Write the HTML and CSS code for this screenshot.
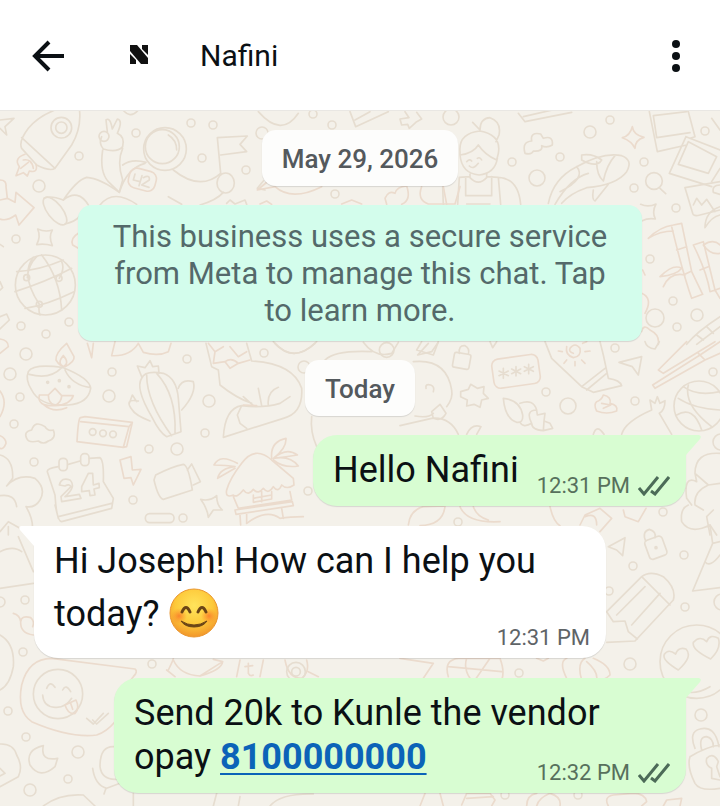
FILE: index.html
```html
<!DOCTYPE html>
<html lang="en">
<head>
    <meta charset="UTF-8">
    <meta name="viewport" content="width=device-width, initial-scale=1.0">
    <title>Nafini</title>
    <link rel="stylesheet" href="styles.css">
</head>
<body>
    <header class="topbar">
        <button class="back" type="button" aria-label="Back">
            <svg width="34" height="32" viewBox="0 0 34 32"><path d="M33 16H4M18 2L4 16L18 30" fill="none" stroke="#0b1014" stroke-width="4"/></svg>
        </button>
        <div class="avatar">
            <svg width="18" height="22" viewBox="0 0 18 22" fill="#111"><path d="M0 0H7L18 13V19H11L0 6Z"/><path d="M12 0H18V10L12 4Z"/><path d="M0 9L6 15V19H0Z"/></svg>
        </div>
        <h1 class="name">Nafini</h1>
        <button class="menu" type="button" aria-label="More options">
            <svg width="8" height="32" viewBox="0 0 8 32" fill="#0b1014"><circle cx="4" cy="4" r="4"/><circle cx="4" cy="16" r="4"/><circle cx="4" cy="28" r="4"/></svg>
        </button>
    </header>
    <main class="chat">
        <!-- doodle wallpaper -->
        <svg class="wallpaper" viewBox="0 333 2160 2085" preserveAspectRatio="xMidYMin slice" aria-hidden="true">
            <!-- rocket, astronaut, flag, globe -->
            <g transform="translate(0 315)">
                <path d="M0 45L42 40L15 65L20 90L0 70M85 70Q130 15 235 -5Q250 60 215 120L165 190Q150 200 110 180L65 130Q55 110 85 70ZM65 98L165 190"/>
                <circle cx="184" cy="68" r="31"/><circle cx="184" cy="68" r="17"/>
                <path class="warm" d="M75 148Q40 160 58 185L48 212L70 203L82 213L88 198Q115 205 108 178M70 165Q95 160 100 190M62 190L85 172"/>
                <path d="M322 80L318 45Q330 35 337 72L352 42Q370 45 352 85Q375 95 368 125Q350 145 310 132Q295 115 305 95M308 135Q298 200 325 230L358 262L368 225Q350 170 368 130"/>
                <circle cx="312" cy="94" r="15"/>
                <path d="M365 10Q390 45 415 15"/>
                <circle cx="495" cy="132" r="64"/><circle cx="487" cy="125" r="51"/>
                <path d="M505 90Q530 105 530 135M368 180Q395 160 438 172M435 175Q380 190 358 262M520 195Q600 260 662 205M190 285Q230 225 260 217Q300 220 358 262M190 285Q235 250 265 300M300 300Q340 250 410 298M600 300Q650 285 670 262M505 275L545 298"/>
                <rect class="warm" x="386" y="194" width="82" height="60" rx="22" transform="rotate(15 427 224)"/>
                <path d="M405 207L400 225L420 230M426 212L417 242M430 218Q450 208 448 225L425 240L447 247"/>
                <path d="M662 205L652 98L742 93L720 118L740 140L662 150"/><ellipse cx="677" cy="234" rx="26" ry="30"/>
                <path d="M790 228L772 250L795 255M680 295L690 285L705 297L735 285L740 298"/>
                <path class="warm" d="M0 225Q20 225 18 245L22 280L45 292L48 262L102 308L57 360L47 330Q20 350 0 342M0 285L22 280"/>
                <ellipse cx="165" cy="318" rx="22" ry="50" transform="rotate(-38 165 318)"/><path d="M132 280Q150 270 190 285M195 357Q225 350 238 335"/>
                <path d="M113 372Q135 382 157 375Q145 395 157 422Q132 415 110 419Q123 395 113 372Z"/>
                <path class="warm" d="M235 385Q210 400 218 420L235 430"/>
                <circle cx="136" cy="540" r="90"/>
                <path d="M50 500Q120 495 190 465M45 560Q140 530 215 490M75 610Q140 600 222 560M100 457Q60 510 118 598Q115 620 120 630M125 450Q180 520 185 615M82 518Q85 480 110 455M178 520Q195 490 185 470"/>
                <circle cx="80" cy="518" r="9"/><circle cx="177" cy="520" r="9"/><circle cx="118" cy="598" r="9"/>
                <path d="M0 635L20 627L28 645L0 672M0 418L10 425M0 530L8 548L0 555"/>
            </g>
            <!-- cook, fish, photos, bamboo -->
            <g transform="translate(1290 315)">
                <path d="M265 25L285 50L425 22M280 35L410 5M128 52L150 75Q150 40 180 38Q215 50 207 90L198 110M90 140Q85 85 150 78Q215 90 205 145L200 165Q165 150 145 120Q130 145 90 150ZM90 150Q95 205 147 210Q195 205 202 160M110 170Q118 160 125 168M142 160Q150 155 155 165M118 183Q130 195 145 175M120 207V218Q145 245 170 218V205M88 217L120 215M170 215L205 217Q265 220 272 298M40 298L38 245M88 217L83 298M107 220V272H185V215M205 217L212 298M110 297H180"/>
                <path d="M285 145Q275 110 305 108Q300 80 332 87L340 100Q370 90 367 120Q350 130 335 122Q340 140 310 138Q305 150 285 145Z"/>
                <path class="warm" d="M607 65Q610 90 642 97Q615 105 615 130Q605 108 577 98Q600 92 607 65Z"/>
                <path d="M355 295Q370 220 440 185Q520 140 575 152Q610 165 590 200Q560 240 470 248Q420 265 395 295M440 185Q470 220 390 260M375 298Q420 220 475 205M455 150Q490 145 515 165Q500 190 455 165ZM500 170Q500 210 520 228Q530 180 555 152M490 255Q485 285 495 288L535 238"/>
                <path d="M658 20L682 140L770 120M670 32L770 20M680 98L780 83M670 32L680 98M775 20L795 95L780 100M768 95L870 135M768 95L718 205L845 245M775 110L860 155L835 205L745 178ZM845 40L870 75M845 230L870 190"/>
                <circle cx="672" cy="228" r="25"/><path d="M690 250L707 266M765 248L870 230M765 248L788 325Q790 335 810 330L870 315M790 300L800 280L815 300L830 283L855 320M870 240Q845 240 850 262L870 268"/>
                <path d="M632 298Q655 308 678 297Q665 320 676 342Q655 338 635 348M870 305Q825 320 825 368Q845 335 870 330"/>
                <path class="warm" d="M655 400Q690 365 730 360L755 355L785 500L818 568L785 580Q760 510 725 365M730 378Q690 378 655 400M740 435L770 425M760 510L785 498M790 420L820 410L855 555L870 580M790 420Q830 500 840 560L870 550M810 495L835 485M690 515Q730 475 755 490Q740 510 690 515ZM700 545Q720 500 765 510"/>
                <path class="warm" d="M820 420Q850 400 870 420M820 420Q840 450 870 445M635 565Q670 580 645 625M635 680Q640 655 660 675Q690 690 685 718M638 495L645 510"/>
                <path d="M770 718Q800 680 870 635M800 718L870 665M800 690L820 705M830 665L850 685"/>
            </g>
            <!-- objects between the date pills -->
            <g transform="translate(675 315)">
                <path d="M100 20Q170 100 220 25M375 20L392 65L490 20M390 45L435 20M540 20L552 38L525 42L530 60L548 58L553 70L575 50L590 42L575 22"/>
                <path class="warm" d="M130 228L97 255L150 245Q200 290 290 245M480 280Q490 255 510 265Q515 245 545 243Q560 285 530 298M480 280L485 298M590 245Q575 285 610 297H690L705 245M655 245L665 298M105 297L125 288L140 298M350 297L380 285L410 297"/>
                <path d="M145 710Q205 780 275 710M300 765Q330 735 440 740M610 715L578 750L620 740L640 712M415 712Q450 760 500 745L520 712"/>
                <circle cx="485" cy="735" r="22"/>
            </g>
            <!-- diya lamp, cactus, fox, calendar, hut -->
            <g transform="translate(0 1005)">
                <path class="warm" d="M200 25Q165 55 168 75Q180 95 195 95Q225 80 222 65ZM190 62Q170 85 190 95Q210 85 190 62"/>
                <path d="M85 110Q100 85 190 98Q270 130 272 160Q265 205 205 210Q120 215 95 165Q75 135 85 110ZM88 118Q150 135 185 98M195 105Q215 150 272 158"/>
                <path class="warm" d="M118 180Q110 215 165 212Q210 210 220 182L185 182L165 160L145 180ZM130 208Q160 235 200 218M145 180Q145 205 165 212Q185 200 185 182"/>
                <circle cx="143" cy="142" r="3"/><circle cx="178" cy="137" r="3"/><circle cx="207" cy="155" r="3"/>
                <path class="warm" d="M262 25L275 68L280 25M345 20L335 62Q390 65 415 25M415 25L430 52Q475 65 505 50L513 25M0 55L25 35Q25 15 0 12M0 168Q25 200 0 245M0 302Q18 310 18 325Q10 345 0 340"/>
                <path d="M425 130Q435 105 490 115Q530 130 535 190L543 290L500 305Q480 295 455 245Q405 160 425 130ZM440 120Q440 200 515 302M470 115Q530 180 525 295M425 125L412 93L435 98L450 77L458 95L475 93L477 115M415 198Q370 190 397 225Q405 240 450 258M535 160Q545 130 580 140Q590 175 545 225M388 205L397 180L410 200"/>
                <path class="warm" d="M242 248Q235 245 231 320L370 337L380 335L397 262L255 245ZM242 260L387 275L370 337M387 275L397 262"/>
                <circle cx="278" cy="291" r="10"/><circle cx="309" cy="295" r="10"/><circle cx="339" cy="298" r="10"/>
                <path d="M80 310Q70 290 95 285Q105 255 135 275Q145 290 160 285Q170 310 145 318Q130 330 115 318Q85 325 80 310Z"/>
                <path d="M618 25L635 95L655 105L660 150Q710 190 755 205M740 25L755 78Q880 85 905 160Q910 235 850 250L670 307Q675 220 725 212Q790 220 840 205L870 185M725 212L712 240L720 265L740 280M775 160L785 212M835 157Q800 170 805 212M730 185L760 212"/>
                <path class="warm" d="M625 25L645 50L640 85L675 80L690 100L715 85L750 75M645 50L670 35M690 35L715 65L740 50M730 210L770 212M675 80Q695 65 715 85"/>
                <path d="M825 25Q880 85 945 25M935 245Q930 290 950 335"/>
                <path d="M0 360Q40 370 38 430L20 453Q55 415 105 430Q140 460 120 495Q105 520 78 515Q105 560 95 600M0 482Q45 475 50 515M0 590L25 560L60 580"/>
                <path d="M142 410Q140 400 175 395M205 388L240 378M268 370L300 368Q312 375 310 440L340 490L335 520L185 560Q170 560 165 480L142 410M165 510L175 550M175 545L335 505"/>
                <rect x="177" y="370" width="25" height="37" rx="11"/><rect x="242" y="356" width="25" height="36" rx="11"/>
                <path d="M178 450Q185 425 210 435Q230 455 195 485L238 478L243 490L185 500L183 485L213 455Q208 445 195 453ZM245 455L265 415L278 415L280 450L297 445L298 458L282 462L285 480L270 482L268 467L245 470Z"/>
                <path class="warm" d="M360 375L393 365L397 405L423 403L400 450L393 428L372 430Z"/>
                <path d="M467 420Q515 395 550 388Q565 390 577 465L490 493Q475 490 462 435ZM562 405L575 387L601 440L580 450M602 493Q630 500 650 482Q650 510 667 525L640 525L625 547Q622 520 602 493Z"/>
                <rect x="436" y="536" width="86" height="27" rx="13"/>
                <path class="warm" d="M680 465Q690 430 725 385Q765 330 815 375L880 430L882 450Q860 465 845 450Q835 475 820 455Q805 480 790 460Q775 480 760 463Q745 485 730 465Q710 490 700 480Q675 490 680 465M700 485L715 520L875 495L870 470M705 525L877 500L880 512L708 538ZM720 540L722 570M740 535V565M845 520L850 550M760 480V502L815 492V470M785 470V500M760 490L815 480"/>
                <path class="warm" d="M712 385Q660 355 642 390Q680 390 705 395Q660 400 653 430L705 400M815 370Q810 320 858 310Q860 340 820 370Q860 335 892 360Q860 365 820 370Q870 360 895 393Q850 400 820 375M740 565Q800 520 840 550Q870 545 910 545"/>
            </g>
            <!-- padlock, kite, shell, basketball -->
            <g transform="translate(1200 1005)">
                <path d="M65 20L50 45L100 60L115 20M270 20L278 38L290 20"/>
                <rect x="160" y="55" width="50" height="45" rx="6" transform="rotate(10 185 78)"/><path d="M178 55Q175 30 195 32Q210 40 205 57"/>
                <rect class="warm" x="278" y="65" width="140" height="88" rx="20" transform="rotate(-8 348 109)"/>
                <path d="M310 100V130M297 108L325 122M297 122L325 108M348 95V123M335 102L362 116M335 116L362 102M386 88V116M373 95L400 109M373 109L400 95"/>
                <path d="M40 80Q140 70 155 165Q160 190 140 215M45 243Q85 250 100 235M78 160Q75 145 92 150Q105 155 100 170M0 272L95 250Q150 245 175 298M95 230L120 208L138 235Q125 260 100 250Z"/>
                <path d="M182 170L205 163L212 148L232 160L252 155L250 175L265 190L245 195L240 217L222 208L200 213L202 195L182 185Z"/>
                <path d="M435 20L455 70L545 155L580 172L665 152Q660 135 625 130L610 60L600 20M545 155L615 100M560 165L620 115"/>
                <path class="warm" d="M520 55Q505 50 510 40Q525 20 540 40Q545 65 520 68Q495 60 500 35M487 50L475 48M500 75L492 85M525 80V92M545 75L555 85M555 50L570 48M548 25L560 20"/>
                <path d="M657 82L725 65L715 120L697 95ZM735 20Q740 40 765 42L778 20"/>
                <path class="warm" d="M775 105L860 20M790 115L945 20M775 105L790 115M758 150L900 60L960 20M765 160L915 75L960 55M758 150L765 160M895 55L915 75"/>
                <circle cx="897" cy="213" r="75"/><path d="M850 155Q890 185 960 170M835 190Q880 220 960 225M830 240Q880 210 905 285M865 150Q850 210 935 275"/>
                <path d="M310 190Q360 195 368 240Q370 265 350 262Q315 250 310 190ZM360 205Q400 190 410 225L412 240L435 235L432 258L450 265L458 280L430 287Q395 285 395 265Q370 280 360 262M410 225Q375 225 395 265M432 258L430 287"/>
                <path class="warm" d="M590 200Q605 195 610 180Q635 185 630 205Q655 210 650 228Q620 240 590 228Q580 210 590 200ZM605 205L632 210L610 220"/>
                <path d="M665 298Q675 260 755 225L750 195L765 205L772 185L780 205L795 197Q795 225 778 235L815 298M200 298Q215 265 243 275L230 298M580 298Q590 265 612 298"/>
                <path d="M960 355Q885 350 885 415L890 440Q850 420 860 490L875 510M885 415L925 450L960 445M925 450Q880 470 885 510L910 525M865 510Q840 520 845 560Q870 600 930 570M940 525L920 545L930 600M930 570L950 600"/>
                <path class="warm" d="M25 570Q30 525 70 515L135 513Q130 570 60 572M180 515Q200 565 300 560M220 515Q230 545 265 555M450 515Q460 560 480 572M540 570L555 540L600 520L635 550L600 590M555 545Q590 530 590 570M670 525L675 545L715 560L738 520"/>
            </g>
            <!-- left side of the message area -->
            <g transform="translate(0 1545)">
                <path d="M0 110Q40 90 65 110M25 35V60M55 65L100 170M0 220L100 205"/>
                <path class="warm" d="M40 295Q60 300 62 320Q60 355 100 360M62 320Q65 300 92 308Q105 320 98 335"/>
                <path d="M0 360Q45 385 40 455Q30 510 0 525"/>
                <path class="warm" d="M155 430Q85 430 65 510Q50 590 95 620Q210 670 290 660Q320 650 345 620M155 430L405 462Q415 470 400 485L365 530"/>
            </g>
            <!-- padlock, pencil, heart-eyes face -->
            <g transform="translate(1200 1545)">
                <rect x="740" y="68" width="55" height="60" rx="10" transform="rotate(-20 768 98)"/><path d="M737 78Q725 50 748 43Q770 50 765 68"/><circle cx="768" cy="98" r="3"/>
                <path d="M625 95L675 68L668 122L650 105ZM620 290L725 185Q750 165 790 185Q830 220 820 255L705 378L620 382M725 185L810 270M735 215L650 300M780 235L695 330M620 290L640 320L675 318L685 350L712 372M938 85L960 80M938 85L878 228L960 218M915 140Q930 160 960 120M930 30L938 85"/>
                <circle cx="890" cy="440" r="110"/>
                <path d="M835 465Q785 435 793 418Q805 400 827 417Q835 395 858 402Q880 425 835 465ZM932 432Q875 405 880 382Q900 360 920 380Q930 355 955 370Q965 400 932 432ZM830 515Q870 550 930 515"/>
                <path class="warm" d="M0 430L100 445L70 490M145 485Q130 435 175 430H300Q315 470 305 495M145 455L305 470M200 430Q190 460 210 490M270 430L225 495M500 490Q475 440 500 430M545 495Q530 445 555 430M580 430Q630 450 630 480Q610 500 580 495M560 440Q595 470 590 495M410 430L430 438L445 430"/>
            </g>
            <!-- winking face, moon, key -->
            <g transform="translate(0 1950)">
                <circle cx="174" cy="132" r="74"/><path d="M140 115Q150 90 165 112M188 120Q198 100 212 125M128 135Q130 170 165 172Q195 175 215 145"/>
                <path class="warm" d="M195 165L228 150Q240 175 225 190Q205 195 195 165ZM212 160L218 178"/>
                <path d="M260 205L280 222L310 190M278 210L290 222L325 190M130 287Q75 300 90 345Q120 390 165 350L173 325Q120 335 130 287Z"/>
                <path d="M0 282Q40 280 50 315Q70 350 55 380L0 410M0 355L15 370L0 378M345 290Q300 285 300 350Q305 390 350 388M278 355Q285 405 320 415L360 400M318 415L312 432M130 468Q180 430 250 435L285 468M400 430V468M640 468L650 430M720 440L715 468M810 468Q840 430 940 432"/>
                <path class="warm" d="M500 60L525 80M505 60Q520 30 520 25M520 30Q540 75 600 78Q665 60 668 35L640 28M600 78L668 35M720 30L710 80M790 30L780 80M745 40V70Q750 80 760 75M735 50L758 47M855 30Q865 85 905 85Q930 65 920 30M925 65L955 80"/>
                <circle cx="888" cy="65" r="28"/><circle cx="888" cy="65" r="13"/>
            </g>
            <g transform="translate(1200 1950)">
                <path d="M885 295Q865 245 900 237Q945 225 957 290M905 300Q895 260 920 260Q940 265 940 290M870 320Q920 290 960 285M870 320Q860 350 885 400Q900 425 960 415M935 355Q915 345 920 325Q940 305 955 335L950 350L960 380M935 355L935 385L960 390"/>
                <path class="warm" d="M60 468L75 430M120 430L130 468M185 465L200 430H270L285 450L275 468M200 445L280 440M380 468Q380 435 410 430M410 468Q415 445 450 430Q485 440 480 468M625 468Q610 440 640 435L700 430Q735 430 740 455L725 468M790 468L800 450L845 445L840 468"/>
            </g>
            <!-- loose bubbles -->
            <g transform="scale(3)" class="dots">
                <circle cx="136" cy="133" r="4"/><circle cx="191" cy="123" r="4"/><circle cx="213" cy="125" r="4"/><circle cx="79" cy="156" r="4"/><circle cx="202" cy="158" r="4"/><circle cx="246" cy="170" r="4"/><circle cx="39" cy="186" r="6"/><circle cx="16" cy="239" r="4"/><circle cx="21" cy="326" r="4"/><circle cx="46" cy="334" r="4"/><circle cx="69" cy="322" r="4"/>
                <circle cx="262" cy="133" r="6"/><circle cx="332" cy="125" r="4"/><circle cx="335" cy="194" r="4"/><circle cx="313" cy="114" r="4"/>
                <circle cx="451" cy="117" r="8"/><circle cx="610" cy="120" r="4"/><circle cx="590" cy="132" r="6"/><circle cx="512" cy="162" r="4"/><circle cx="560" cy="157" r="4"/><circle cx="537" cy="178" r="8"/><circle cx="705" cy="131" r="4"/><circle cx="644" cy="162" r="4"/><circle cx="634" cy="188" r="4"/><circle cx="676" cy="208" r="4"/><circle cx="650" cy="259" r="4"/><circle cx="673" cy="301" r="4"/><circle cx="697" cy="315" r="6"/><circle cx="677" cy="327" r="4"/><circle cx="655" cy="318" r="9"/>
                <circle cx="26" cy="354" r="6"/><circle cx="10" cy="374" r="6"/><circle cx="20" cy="397" r="4"/><circle cx="112" cy="372" r="4"/><circle cx="109" cy="396" r="6"/><circle cx="14" cy="424" r="4"/><circle cx="187" cy="359" r="4"/><circle cx="209" cy="401" r="6"/><circle cx="205" cy="433" r="4"/><circle cx="177" cy="449" r="6"/><circle cx="149" cy="449" r="4"/><circle cx="34" cy="462" r="4"/><circle cx="133" cy="500" r="4"/><circle cx="183" cy="518" r="4"/><circle cx="308" cy="491" r="4"/><circle cx="264" cy="353" r="4"/><circle cx="304" cy="367" r="6"/>
                <circle cx="615" cy="348" r="4"/><circle cx="713" cy="372" r="4"/><circle cx="568" cy="406" r="8"/><circle cx="546" cy="392" r="4"/><circle cx="635" cy="401" r="4"/><circle cx="663" cy="512" r="4"/><circle cx="721" cy="442" r="8"/><circle cx="458" cy="522" r="4"/>
                <circle cx="684" cy="555" r="4"/><circle cx="633" cy="566" r="4"/><circle cx="685" cy="607" r="4"/><circle cx="630" cy="664" r="6"/><circle cx="519" cy="673" r="4"/><circle cx="722" cy="602" r="8"/><circle cx="609" cy="591" r="4"/>
                <circle cx="8" cy="711" r="4"/><circle cx="26" cy="737" r="4"/><circle cx="78" cy="752" r="6"/><circle cx="68" cy="779" r="4"/><circle cx="30" cy="790" r="6"/><circle cx="152" cy="664" r="4"/><circle cx="23" cy="652" r="4"/><circle cx="25" cy="600" r="4"/><circle cx="0" cy="602" r="5"/>
                <circle cx="701" cy="715" r="6"/><circle cx="505" cy="795" r="4"/><circle cx="578" cy="795" r="4"/>
            </g>
        </svg>

        <div class="pill">May 29, 2026</div>
        <p class="notice">This business uses a secure service from Meta to manage this chat. Tap to learn more.</p>
        <div class="pill">Today</div>

        <div class="bubble out short">
            <p class="text">Hello Nafini</p>
            <div class="meta">
                <time>12:31 PM</time>
                <svg class="ticks" width="32" height="20" viewBox="0 0 32 20"><path d="M1 12L6 18L20 1M13 15L17 18L31 1" fill="none" stroke="#4c6b58" stroke-width="3"/></svg>
            </div>
            <svg class="tail" width="16" height="20" viewBox="0 0 16 20"><path d="M0 0H13Q16 1 14 4L0 20Z" fill="#d8fdd2"/></svg>
        </div>

        <div class="bubble in">
            <svg class="tail" width="16" height="20" viewBox="0 0 16 20"><path d="M16 0H3Q0 1 2 4L16 20Z" fill="#fff"/></svg>
            <p class="text">Hi Joseph! How can I help you today?
                <svg class="emoji" width="50" height="50" viewBox="0 0 50 50" role="img" aria-label="smiling face">
                    <defs>
                        <radialGradient id="face" cx="50%" cy="35%" r="65%"><stop offset="0" stop-color="#ffe45c"/><stop offset=".6" stop-color="#fdc93a"/><stop offset="1" stop-color="#f2962a"/></radialGradient>
                        <radialGradient id="cheek"><stop offset="0" stop-color="#f9732a" stop-opacity=".8"/><stop offset="1" stop-color="#f98a2a" stop-opacity="0"/></radialGradient>
                    </defs>
                    <circle cx="25" cy="25" r="24" fill="url(#face)" stroke="#ea962f"/>
                    <circle cx="10" cy="28" r="8" fill="url(#cheek)"/><circle cx="40" cy="28" r="8" fill="url(#cheek)"/>
                    <path d="M13 24Q17 15 21 24M29 24Q33 15 37 24" fill="none" stroke="#6b4516" stroke-width="3" stroke-linecap="round"/>
                    <path d="M12 33Q25 41 38 33Q34 39 25 39Q16 39 12 33Z" fill="#6b4516" stroke="#6b4516" stroke-linejoin="round"/>
                </svg>
            </p>
            <div class="meta"><time>12:31 PM</time></div>
        </div>

        <div class="bubble out">
            <p class="text">Send 20k to Kunle the vendor opay <a href="tel:8100000000">8100000000</a></p>
            <div class="meta">
                <time>12:32 PM</time>
                <svg class="ticks" width="32" height="20" viewBox="0 0 32 20"><path d="M1 12L6 18L20 1M13 15L17 18L31 1" fill="none" stroke="#4c6b58" stroke-width="3"/></svg>
            </div>
            <svg class="tail" width="16" height="20" viewBox="0 0 16 20"><path d="M0 0H13Q16 1 14 4L0 20Z" fill="#d8fdd2"/></svg>
        </div>
    </main>
</body>
</html>
```
FILE: styles.css
```css
*{
    margin: 0;
    padding: 0;
    box-sizing: border-box;
}
body{
    min-height: 100vh;
    display: flex;
    flex-direction: column;
    font-family: Roboto, "Liberation Sans", sans-serif;
    color: #0b1014;
    background-color: #f4f1ea;
}
button{
    border: 0;
    background: none;
    cursor: pointer;
}
svg{
    display: block;
}
/* top bar */
.topbar{
    display: flex;
    align-items: center;
    height: 111px;
    padding: 2px 32px 0 31px;
    background-color: #fff;
    border-bottom: 1px solid #e9e7e3;
}
.avatar{
    width: 80px;
    margin: 0 21px 0 34px;
    display: flex;
    justify-content: center;
}
.name{
    flex: 1;
    font-size: 30px;
    font-weight: 400;
    line-height: 36px;
}
.menu{
    width: 24px;
    display: flex;
    justify-content: center;
}
/* chat */
.chat{
    flex: 1;
    position: relative;
    overflow: hidden;
    display: flex;
    flex-direction: column;
    align-items: center;
    gap: 19px;
    padding: 19px 34px 13px;
}
.wallpaper{
    position: absolute;
    top: 0;
    left: 0;
    width: 100%;
    height: 100%;
    fill: none;
    stroke: #e6ddd0;
    stroke-width: 5;
    stroke-linejoin: round;
    stroke-linecap: round;
}
.wallpaper .warm{
    stroke: #ebdbcd;
}
.wallpaper .dots{
    stroke-width: 1.6;
}
.pill, .notice, .bubble{
    position: relative;
    box-shadow: 0 1px 1px rgba(11, 20, 26, 0.12);
}
.pill{
    padding: 13px 20px 11px;
    border-radius: 14px;
    background-color: #fdfdfc;
    color: #54595d;
    font-size: 26px;
    font-weight: 500;
    line-height: 32px;
}
.notice{
    max-width: calc(100% - 88px);
    padding: 13px 32px 12px;
    border-radius: 14px;
    background-color: #d3fdec;
    color: #54696a;
    font-size: 31px;
    line-height: 37px;
    text-align: center;
}
.bubble{
    max-width: calc(100% - 80px);
    padding: 13px 16px 7px 20px;
    border-radius: 24px;
    font-size: 36px;
    line-height: 44px;
}
.bubble + .bubble{
    margin-top: 1px;
}
.text{
    padding-bottom: 7px;
}
.in{
    align-self: flex-start;
    background-color: #fff;
    border-top-left-radius: 0;
}
.out{
    align-self: flex-end;
    background-color: #d8fdd2;
    border-top-right-radius: 0;
}
.short{
    display: flex;
    gap: 18px;
}
.meta{
    display: flex;
    justify-content: flex-end;
    align-items: center;
    gap: 8px;
    margin-top: -26px;
    color: #5f6467;
    font-size: 22px;
    line-height: 26px;
}
.out .meta{
    color: #57705c;
}
.short .meta{
    align-self: flex-end;
    margin-top: 0;
}
.tail{
    position: absolute;
    top: 0;
}
.in .tail{
    right: 100%;
}
.out .tail{
    left: 100%;
}
.emoji{
    display: inline-block;
    margin: 5px 0 6px;
    vertical-align: -18px;
}
.bubble a{
    color: #0b63b8;
    font-weight: 700;
    text-decoration-thickness: 2px;
    text-underline-offset: 4px;
}
```
